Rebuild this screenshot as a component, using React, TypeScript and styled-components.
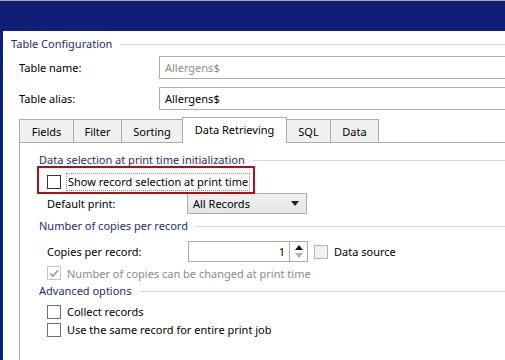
import React from "react";
import styled, { createGlobalStyle } from "styled-components";

const Global = createGlobalStyle`
  html, body { margin: 0; padding: 0; background: #fff; }
  body {
    font-family: "Noto Sans", "DejaVu Sans", sans-serif;
    font-size: 11px;
    color: #000;
  }
  * { box-sizing: border-box; }
`;

const NAVY = "#0f1f75";
const HEAD = "#1e2b80";
const BORDER = "#acacac";

const Window = styled.div`
  width: 505px;
  height: 360px;
  overflow: hidden;
  display: flex;
  flex-direction: column;
  background: ${NAVY};
`;

const TitleBar = styled.div`
  flex: none;
  height: 31px;
  border-top: 1px solid #a9a9a9;
  background: ${NAVY};
`;

const Body = styled.div`
  flex: 1;
  display: flex;
  min-height: 0;
`;

const Frame = styled.div`
  flex: none;
  width: 3px;
  background: ${NAVY};
`;

const Sheet = styled.div`
  flex: 1;
  min-width: 0;
  background: #fff;
  overflow: hidden;
  padding: 5px 0 0 8px;
  display: flex;
  flex-direction: column;
`;

const GroupHeader = styled.div<{ $mt?: number }>`
  flex: none;
  display: flex;
  align-items: center;
  height: 16px;
  margin-top: ${(p) => p.$mt ?? 0}px;
  color: ${HEAD};
  white-space: nowrap;
  line-height: 16px;
`;

const GroupLine = styled.div`
  flex: 1;
  height: 1px;
  margin-left: 8px;
  background: #d9d9d9;
`;

const FieldRow = styled.div<{ $mt?: number; $h?: number }>`
  flex: none;
  display: flex;
  align-items: center;
  height: ${(p) => p.$h ?? 22}px;
  margin-top: ${(p) => p.$mt ?? 0}px;
  padding-left: 8px;
  white-space: nowrap;
`;

const Label = styled.div<{ $w: number }>`
  flex: none;
  width: ${(p) => p.$w}px;
`;

const TextInput = styled.div<{ $disabled?: boolean }>`
  flex: none;
  width: 400px;
  height: 100%;
  border: 1px solid ${BORDER};
  background: #fff;
  padding: 0 5px;
  display: flex;
  align-items: center;
  color: ${(p) => (p.$disabled ? "#8d8d8d" : "#000")};
`;

const TabStrip = styled.div`
  flex: none;
  display: flex;
  align-items: flex-end;
  height: 25px;
  margin-top: 7px;
  margin-left: 8px;
  position: relative;
  z-index: 2;
`;

const Tab = styled.div<{ $w: number; $active?: boolean }>`
  flex: none;
  width: ${(p) => p.$w}px;
  height: ${(p) => (p.$active ? 26 : 23)}px;
  margin-bottom: ${(p) => (p.$active ? -1 : 0)}px;
  margin-left: -1px;
  &:first-child { margin-left: 0; }
  border: 1px solid ${BORDER};
  border-bottom: none;
  background: ${(p) => (p.$active ? "#fff" : "#f0f0f0")};
  display: flex;
  align-items: center;
  justify-content: center;
  padding-bottom: ${(p) => (p.$active ? 2 : 0)}px;
  position: relative;
  z-index: ${(p) => (p.$active ? 2 : 1)};
  white-space: nowrap;
`;

const Panel = styled.div`
  flex: none;
  position: relative;
  width: 500px;
  height: 240px;
  margin-left: 8px;
  border: 1px solid ${BORDER};
  padding: 9px 0 0 19px;
  display: flex;
  flex-direction: column;
`;

const Indent = styled.div<{ $mt?: number; $h: number }>`
  flex: none;
  display: flex;
  align-items: center;
  height: ${(p) => p.$h}px;
  margin-top: ${(p) => p.$mt ?? 0}px;
  padding-left: 8px;
  white-space: nowrap;
`;

const Box = styled.span<{ $tone?: "dark" | "mid" | "soft" | "off" }>`
  flex: none;
  width: 14px;
  height: 14px;
  margin-right: 6px;
  border: 1px solid
    ${(p) =>
      p.$tone === "dark"
        ? "#333"
        : p.$tone === "soft"
        ? "#b5b5b5"
        : p.$tone === "off"
        ? "#c6c6c6"
        : "#707070"};
  background: ${(p) => (p.$tone === "soft" ? "#f2f2f2" : "#fff")};
  display: flex;
  align-items: center;
  justify-content: center;
`;

const FocusLabel = styled.span`
  border: 1px dotted #8f8f8f;
  padding: 0 1px 1px 1px;
  margin-left: -1px;
  line-height: 15px;
`;

const DimText = styled.span`
  color: #8a8a8a;
`;

const Highlight = styled.div`
  position: absolute;
  left: 17px;
  top: 23px;
  width: 218px;
  height: 28px;
  border: 2px solid #b00f18;
  pointer-events: none;
`;

const Combo = styled.div`
  flex: none;
  width: 120px;
  height: 21px;
  border: 1px solid ${BORDER};
  background: linear-gradient(#f0f0f0, #e5e5e5);
  display: flex;
  align-items: center;
  justify-content: space-between;
  padding: 0 7px 0 5px;
`;

const Spin = styled.div`
  flex: none;
  display: flex;
  width: 120px;
  height: 21px;
  border: 1px solid ${BORDER};
  background: #fff;
  margin-right: 6px;
`;

const SpinValue = styled.div`
  flex: 1;
  display: flex;
  align-items: center;
  justify-content: flex-end;
  padding-right: 4px;
`;

const SpinButtons = styled.div`
  flex: none;
  width: 18px;
  border-left: 1px solid ${BORDER};
  display: flex;
  flex-direction: column;
  align-items: center;
  justify-content: center;
  gap: 3px;
`;

const Arrow = ({ up, color }: { up?: boolean; color: string }) => (
  <svg width="8" height="5" viewBox="0 0 8 5">
    <path d={up ? "M0 5 L4 0 L8 5 Z" : "M0 0 L8 0 L4 5 Z"} fill={color} />
  </svg>
);

const Check = () => (
  <svg width="10" height="9" viewBox="0 0 10 9">
    <path d="M1 4.5 L3.8 7.3 L9 1.2" stroke="#9a9a9a" strokeWidth="1.6" fill="none" />
  </svg>
);

const tabs: { t: string; w: number; active?: boolean }[] = [
  { t: "Fields", w: 55 },
  { t: "Filter", w: 49 },
  { t: "Sorting", w: 62 },
  { t: "Data Retrieving", w: 105, active: true },
  { t: "SQL", w: 45 },
  { t: "Data", w: 49 },
];

export default function App() {
  return (
    <>
      <Global />
      <Window>
        <TitleBar />
        <Body>
          <Frame />
          <Sheet>
            <GroupHeader>
              Table Configuration
              <GroupLine />
            </GroupHeader>
            <FieldRow $mt={4} $h={23}>
              <Label $w={140}>Table name:</Label>
              <TextInput $disabled>Allergens$</TextInput>
            </FieldRow>
            <FieldRow $mt={8} $h={23}>
              <Label $w={140}>Table alias:</Label>
              <TextInput>Allergens$</TextInput>
            </FieldRow>
            <TabStrip>
              {tabs.map((tab) => (
                <Tab key={tab.t} $w={tab.w} $active={tab.active}>
                  {tab.t}
                </Tab>
              ))}
            </TabStrip>
            <Panel>
              <GroupHeader>
                Data selection at print time initialization
                <GroupLine />
              </GroupHeader>
              <Indent $mt={4} $h={20}>
                <Box $tone="dark" />
                <FocusLabel>Show record selection at print time</FocusLabel>
              </Indent>
              <Indent $mt={1} $h={21}>
                <Label $w={140}>Default print:</Label>
                <Combo>
                  All Records
                  <Arrow color="#222" />
                </Combo>
              </Indent>
              <GroupHeader $mt={4}>
                Number of copies per record
                <GroupLine />
              </GroupHeader>
              <Indent $mt={7} $h={21}>
                <Label $w={141}>Copies per record:</Label>
                <Spin>
                  <SpinValue>1</SpinValue>
                  <SpinButtons>
                    <Arrow up color="#111" />
                    <Arrow color="#b0b0b0" />
                  </SpinButtons>
                </Spin>
                <Box $tone="soft" />
                Data source
              </Indent>
              <Indent $mt={2} $h={18}>
                <Box $tone="off">
                  <Check />
                </Box>
                <DimText>Number of copies can be changed at print time</DimText>
              </Indent>
              <GroupHeader $mt={1}>
                Advanced options
                <GroupLine />
              </GroupHeader>
              <Indent $mt={4} $h={17}>
                <Box />
                Collect records
              </Indent>
              <Indent $mt={1} $h={17}>
                <Box />
                Use the same record for entire print job
              </Indent>
              <Highlight />
            </Panel>
          </Sheet>
        </Body>
      </Window>
    </>
  );
}
